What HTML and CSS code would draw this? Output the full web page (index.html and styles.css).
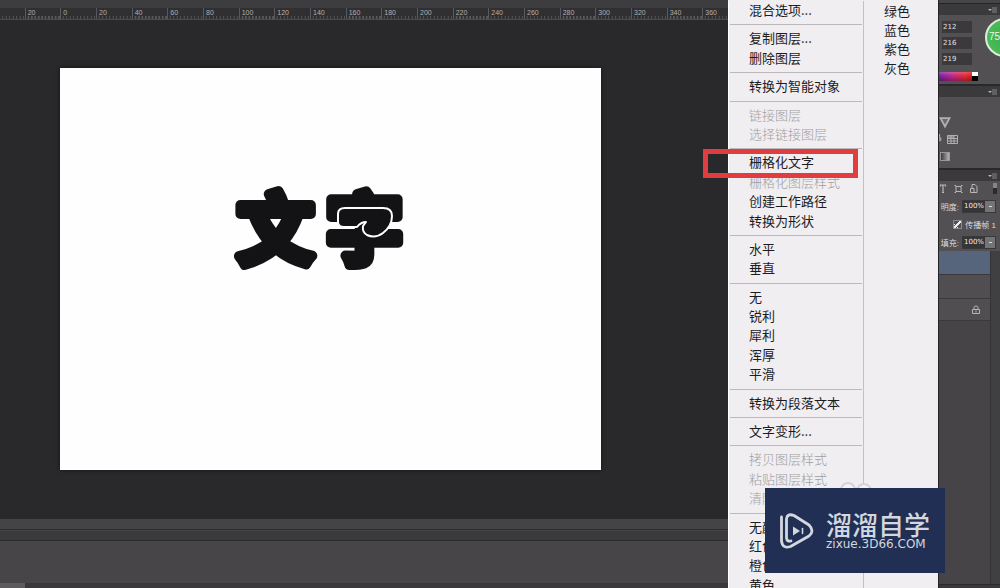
FILE: index.html
```html
<!DOCTYPE html>
<html lang="zh-CN">
<head>
<meta charset="utf-8">
<title>文字 - 栅格化文字</title>
<link rel="stylesheet" href="styles.css">
</head>
<body>
<div class="app">
  <main class="editor">
    <div class="tab-strip"></div>
    <div class="ruler">
      <div class="ruler-scale">
        <span></span><span>20</span><span>0</span><span>20</span><span>40</span><span>60</span><span>80</span><span>100</span><span>120</span><span>140</span><span>160</span><span>180</span><span>200</span><span>220</span><span>240</span><span>260</span><span>280</span><span>300</span><span>320</span><span>340</span><span>360</span>
      </div>
    </div>
    <div class="workspace">
      <div class="document">
        <svg class="artwork" width="200" height="150" viewBox="0 -20 200 150">
          <text x="12" y="82">文</text>
          <text x="101" y="82">字</text>
          <path class="swash" d="M113 46V38q0-6 7-6h38q9 0 9 8 0 10-9 17-8 6-16 2-5-3-4-9l3-4q-5 0-9 5h-13q-6 0-6-5z"/>
        </svg>
      </div>
    </div>
    <div class="status-bar"></div>
    <div class="timeline-head"></div>
    <div class="timeline"></div>
    <div class="timeline-foot"><div class="foot-tab"></div></div>
  </main>

  <aside class="panels">
    <div class="panel-edge"></div>
    <section class="panel color-panel">
      <header class="panel-head"><svg class="flyout" viewBox="0 0 9 6"><path d="M0 2h4L2 4z" fill="#b5b4b6"/><path d="M4 1h5M4 3h5M4 5h5" stroke="#858486" stroke-width="1"/></svg></header>
      <div class="color-body">
        <input class="channel" aria-label="R" value="212">
        <input class="channel" aria-label="G" value="216">
        <input class="channel" aria-label="B" value="219">
        <div class="spectrum"><div class="spectrum-hue"></div><div class="spectrum-ends"></div></div>
      </div>
    </section>
    <section class="panel adjust-panel">
      <header class="panel-head"><svg class="flyout" viewBox="0 0 9 6"><path d="M0 2h4L2 4z" fill="#b5b4b6"/><path d="M4 1h5M4 3h5M4 5h5" stroke="#858486" stroke-width="1"/></svg></header>
      <div class="adjust-body">
        <svg width="20" height="44" viewBox="0 0 20 44" fill="none" stroke="#b0afb1">
          <path d="M1.500 1.200h9L6 9.500z" stroke-width="1.800" fill="#6b6a6c"/>
          <path d="M0 17v3" stroke-width="2"/><circle cx="0" cy="22" r="2.500" fill="#9a999b" stroke="none"/>
          <path d="M8.500 18.500h10v8h-10zM8.500 21.500h10M8.500 24h10M12 18.500v8M15 18.500v8"/>
          <path d="M9 19h6v3H9z" fill="#b0afb1" stroke="none" opacity=".6"/>
          <rect x="1.500" y="35.500" width="9" height="8" fill="url(#fade)" stroke="#98979a"/>
          <defs><linearGradient id="fade"><stop stop-color="#333"/><stop offset="1" stop-color="#bbb"/></linearGradient></defs>
        </svg>
      </div>
    </section>
    <section class="panel layers-panel">
      <header class="panel-head"><svg class="flyout" viewBox="0 0 9 6"><path d="M0 2h4L2 4z" fill="#b5b4b6"/><path d="M4 1h5M4 3h5M4 5h5" stroke="#858486" stroke-width="1"/></svg></header>
      <div class="filter-row">
        <svg width="60" height="14" viewBox="0 0 60 14" fill="none" stroke="#b8b7b9">
          <path d="M1.500 4.500V3h5v1.500M4 3v7M3 10.500h2" stroke-width="1.200"/>
          <path d="M17 4v6M22 4v6M17 4.500h5M17 9.500h5M15.500 3.500H17M22 3.500h1.500M15.500 10.500H17M22 10.500h1.500"/>
          <path d="M33 6V2.500h3l2 2V6M31.500 6.500h3.500v4h-3.500zM35 10.500h3V6"/>
          <rect x="54" y="1" width="4" height="11" fill="#2b2a2c" stroke="none"/><rect x="54" y="1" width="4" height="5" fill="#858486" stroke="none"/>
        </svg>
      </div>
      <div class="option-row"><label for="opacity">明度:</label><select id="opacity"><option>100%</option></select></div>
      <div class="option-row"><input type="checkbox" id="propagate" checked><label for="propagate">传播帧 1</label></div>
      <div class="option-row"><label for="fill">填充:</label><select id="fill"><option>100%</option></select></div>
      <div class="layers">
        <div class="layer-list">
          <div class="layer selected"></div>
          <div class="layer"></div>
          <div class="layer locked"><svg width="8" height="10" viewBox="0 0 8 10" fill="none" stroke="#b5b4b6"><path d="M.5 4.500h7v4h-7zM2 4V2.500Q2 1 4 1t2 1.500V4M4 5.500v2"/></svg></div>
        </div>
        <div class="layer-scroll"></div>
      </div>
      <div class="layers-foot"></div>
    </section>
  </aside>

  <div class="badge">75</div>

  <nav class="menu">
    <ul class="menu-main">
      <li><button>混合选项...</button></li>
      <li class="rule"></li>
      <li><button>复制图层...</button></li>
      <li><button>删除图层</button></li>
      <li class="rule"></li>
      <li><button>转换为智能对象</button></li>
      <li class="rule"></li>
      <li><button disabled>链接图层</button></li>
      <li><button disabled>选择链接图层</button></li>
      <li class="rule"></li>
      <li><button>栅格化文字</button></li>
      <li><button disabled>栅格化图层样式</button></li>
      <li><button>创建工作路径</button></li>
      <li><button>转换为形状</button></li>
      <li class="rule"></li>
      <li><button>水平</button></li>
      <li><button>垂直</button></li>
      <li class="rule"></li>
      <li><button>无</button></li>
      <li><button>锐利</button></li>
      <li><button>犀利</button></li>
      <li><button>浑厚</button></li>
      <li><button>平滑</button></li>
      <li class="rule"></li>
      <li><button>转换为段落文本</button></li>
      <li class="rule"></li>
      <li><button>文字变形...</button></li>
      <li class="rule"></li>
      <li><button disabled>拷贝图层样式</button></li>
      <li><button disabled>粘贴图层样式</button></li>
      <li><button disabled>清除图层样式</button></li>
      <li class="rule"></li>
      <li><button>无颜色</button></li>
      <li><button>红色</button></li>
      <li><button>橙色</button></li>
      <li><button>黄色</button></li>
    </ul>
    <ul class="menu-more">
      <li><button>绿色</button></li>
      <li><button>蓝色</button></li>
      <li><button>紫色</button></li>
      <li><button>灰色</button></li>
    </ul>
  </nav>

  <div class="highlight"></div>

  <svg class="rings" viewBox="0 0 34 16" fill="#f3f2f4" stroke="#d5d3d6" stroke-width="2"><circle cx="9" cy="9" r="7"/><circle cx="25" cy="10" r="7"/></svg>
  <div class="watermark">
    <svg class="mark" viewBox="0 0 36 38" fill="none" stroke="#d3d7df" stroke-linecap="round" stroke-linejoin="round">
      <path d="M2.500 5v24q1 8 9 5.500L30 24q6-5 0-11L15 3.500Q8 1 7.500 7v19q.5 4 4.500 3" stroke-width="2.800"/>
      <path d="M14 14.500v9l7-4.500z" fill="#d3d7df" stroke="none"/>
      <path d="M23.500 16.500v5" stroke-width="1.600"/>
    </svg>
    <div class="brand"><strong>溜溜自学</strong><span>zixue.3D66.COM</span></div>
  </div>
</div>
</body>
</html>
```
FILE: styles.css
```css
* { box-sizing: border-box; }

body {
  margin: 0;
  background: #29282a;
  font-family: "Liberation Sans", "Noto Sans CJK SC", sans-serif;
}

.app {
  position: relative;
  display: flex;
  height: 100vh;
  overflow: hidden;
}

ul { margin: 0; padding: 0; list-style: none; }

/* Editor */
.editor {
  flex: 1;
  min-width: 0;
  display: flex;
  flex-direction: column;
}

.tab-strip { height: 8px; background: #3d3c3e; }

.ruler {
  height: 12px;
  overflow: hidden;
  background: #302f31;
  border-bottom: 1px solid #4c4b4d;
}

.ruler-scale {
  display: grid;
  grid-template-columns: repeat(21, 1fr);
  width: 749px;
  height: 11px;
  margin-left: -11px;
}

.ruler-scale span {
  padding-left: 2px;
  border-left: 1px solid #59585a;
  background: linear-gradient(90deg, transparent 2px, #59585a 2px, #59585a 3px, transparent 3px) 0 100% / 10% 3px repeat-x;
  color: #b0afb1;
  font-size: 7px;
  line-height: 10px;
}

.workspace {
  flex: 1;
  min-height: 0;
  display: flex;
  padding: 48px 337px 49px 60px;
  background: #29282a;
}

.document {
  flex: 1;
  padding: 88px 0 0 165px;
  background: #fefefe;
  box-shadow: 0 0 4px #151416;
}

.artwork {
  display: block;
  fill: #131214;
  stroke: #131214;
  stroke-width: 10px;
  stroke-linejoin: round;
  font: 700 77px "Noto Sans CJK SC", sans-serif;
}
.swash { stroke: #fefefe; stroke-width: 2px; }

.status-bar { height: 11px; background: #444345; border-bottom: 1px solid #2d2c2e; }
.timeline-head { height: 11px; background: #3a393b; border-bottom: 1px solid #29282a; border-top: 1px solid #454446; }
.timeline { height: 42px; background: #474547; }
.timeline-foot { height: 5px; background: #39383a; }
.foot-tab { width: 25px; height: 5px; background: #5c5c5c; }

/* Panels */
.panels {
  width: 62px;
  display: flex;
  flex-direction: column;
  border-left: 1px solid #242325;
  background: #464446;
}

.panel-edge { height: 4px; background: #464547; border-bottom: 1px solid #242325; }
.panel-head {
  display: flex;
  justify-content: flex-end;
  align-items: center;
  height: 11px;
  padding-right: 3px;
  background: #3a393b;
}
.flyout { width: 9px; height: 6px; }
.panel { border-bottom: 2px solid #29282a; background: #525053; }

.color-body { display: grid; gap: 4px; padding: 6px 0 3px; }
.channel {
  width: 30px;
  height: 12px;
  margin-left: 3px;
  padding: 0 0 0 1px;
  border: 0;
  background: #3a393b;
  color: #e2e1e3;
  font: 7px/12px "DejaVu Sans", sans-serif;
}
.spectrum { display: flex; height: 9px; margin-top: 3px; }
.spectrum-hue { width: 33px; background: linear-gradient(#fff3, #0000 40%, #0005), linear-gradient(90deg, #7526a8, #c42890 40%, #e92b35 80%, #db2020); }
.spectrum-ends { width: 6px; background: linear-gradient(#fff 50%, #000 50%); }

.adjust-body { padding: 20px 0 7px; }
.adjust-body svg { display: block; }

.layers-panel { flex: 1; display: flex; flex-direction: column; border: 0; }
.filter-row { height: 15px; margin-top: 1px; }
.filter-row svg { display: block; }
.option-row {
  display: flex;
  align-items: center;
  justify-content: flex-end;
  gap: 3px;
  height: 18px;
  padding-right: 4px;
  color: #dddcde;
  font-size: 8px;
  white-space: nowrap;
}
.option-row select {
  flex: none;
  appearance: none;
  width: 34px;
  height: 13px;
  padding: 0 0 0 1px;
  border: 1px solid #39383a;
  border-radius: 0;
  background: linear-gradient(#ddd, #ddd) 26px 5px / 3px 1px no-repeat, linear-gradient(90deg, #353436 22px, #747375 22px);
  color: #eee;
  font: 7px/11px "DejaVu Sans", sans-serif;
}
.option-row input {
  appearance: none;
  width: 9px;
  height: 9px;
  margin: 0;
  border: 1px solid #8b8a8c;
  background:
    linear-gradient(45deg, transparent 40%, #eee 40%, #eee 60%, transparent 60%) 0 3px / 4px 4px no-repeat,
    linear-gradient(135deg, transparent 42%, #eee 42%, #eee 58%, transparent 58%);
}

.layers { flex: 1; display: flex; background: #464446; }
.layer-list { flex: 1; }
.layer { height: 24px; border-bottom: 1px solid #3a393b; background: #504e51; }
.layer.selected { background: #56657c; }
.layer.locked { height: 22px; padding: 6px 0 0 33px; }
.layer svg { display: block; }
.layer-scroll { width: 10px; background: #403f41; border-left: 1px solid #343335; }
.layers-foot { height: 4px; background: #39383a; border-top: 1px solid #29282a; }

.badge {
  position: absolute;
  top: 18px;
  right: -24px;
  width: 39px;
  height: 39px;
  padding-left: 2px;
  border: 2px solid #dcefdc;
  border-radius: 50%;
  background: radial-gradient(circle, #3dae4b, #4fc05b);
  color: #e8f8e8;
  font-size: 10px;
  line-height: 34px;
}

/* Context menu */
.menu {
  position: absolute;
  top: 0;
  right: 62px;
  bottom: -7px;
  display: grid;
  grid-template-columns: 136px 1fr;
  width: 210px;
  padding-top: 1px;
  background: #f0eef1;
}

.menu-main {
  display: flex;
  flex-direction: column;
  border-left: 1px solid #fff;
  border-right: 1px solid #c3c1c4;
}
.menu-main li { flex: 1; display: flex; align-items: flex-start; padding-left: 20px; }
.menu-main .rule { flex: none; height: 1px; margin: 4px 1px; background: #bbb9bc; }
.menu-more { padding-left: 20px; }
.menu-more li { display: flex; height: 19px; }

.menu button {
  padding: 0;
  border: 0;
  background: none;
  color: #1d1c1e;
  font: 13px/18px "Noto Sans CJK SC", sans-serif;
  white-space: nowrap;
}
.menu button:disabled { color: #a09ea1; font-weight: 300; }

.highlight {
  position: absolute;
  top: 149px;
  right: 142px;
  width: 155px;
  height: 29px;
  border: 5px solid #e03d40;
}

/* Watermark */
.rings { position: absolute; right: 127px; bottom: 91px; width: 34px; height: 16px; }
.watermark {
  position: absolute;
  right: 55px;
  bottom: 15px;
  display: flex;
  align-items: center;
  gap: 11px;
  width: 180px;
  height: 85px;
  padding-left: 14px;
  background: #212f55;
  color: #d3d7df;
}
.mark { flex: none; width: 36px; height: 38px; }
.brand { display: grid; }
.brand strong { font: 500 26px/26px "Noto Sans CJK SC", sans-serif; }
.brand span { font: 12px/14px "DejaVu Sans", sans-serif; }
```
